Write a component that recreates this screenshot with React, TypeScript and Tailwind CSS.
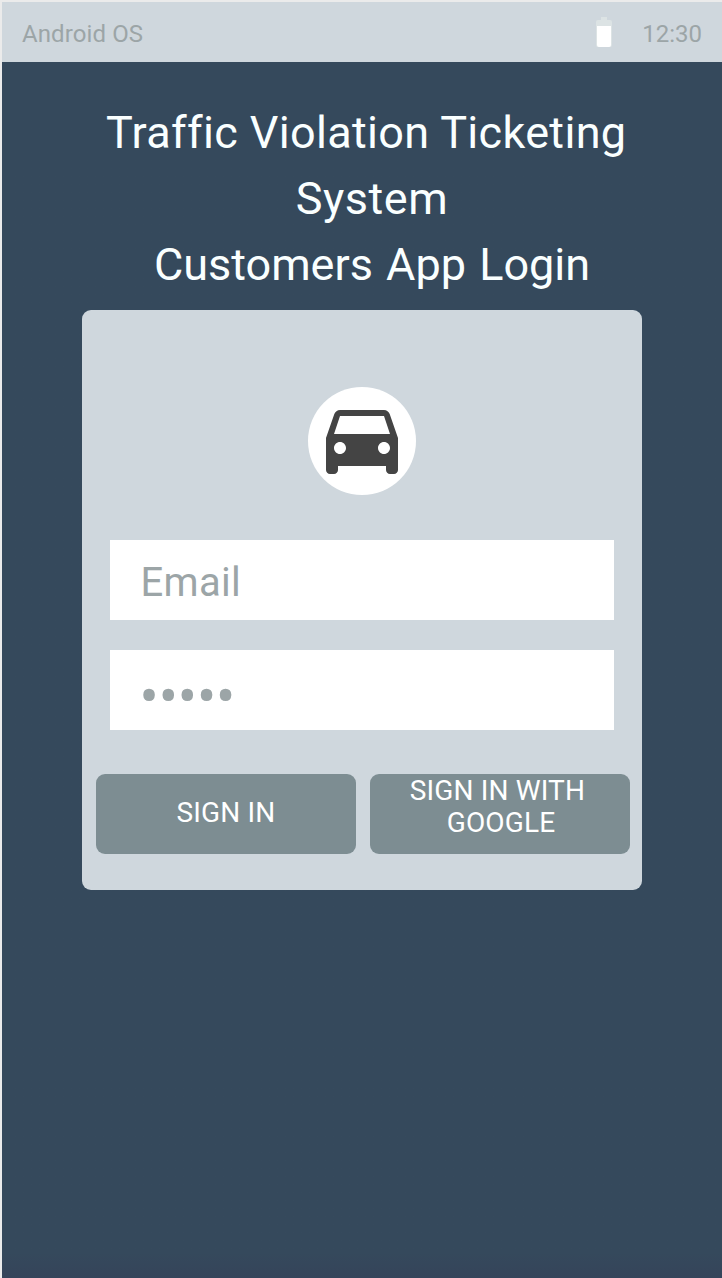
import React from "react";

export default function App() {
  return (
    <main className="flex h-[1278px] w-[722px] flex-col border-l-2 border-t-2 border-[#ebebeb] bg-[#35495c] bg-linear-to-b from-[#35495c] from-98% to-[#35445a] bg-origin-border font-['Roboto','Noto_Sans',sans-serif]">
      <header className="flex h-[60px] items-center bg-[#cfd7dd] pl-5 pr-5 text-2xl text-[#9ca5a7]">
        <span className="pt-1 tracking-[0.1px]">Android OS</span>
        <svg className="ml-auto h-[30px] w-4" viewBox="0 0 16 30">
          <path fill="#dce3e4" d="M5 0h6v3h3q2 0 2 2v23q0 2-2 2H2q-2 0-2-2V5q0-2 2-2h3z" />
          <path fill="#fff" d="M1 9h14v19q0 2-2 2H3q-2 0-2-2z" />
        </svg>
        <time className="ml-[30px] pt-1">12:30</time>
      </header>
      <h1 className="mt-[38px] h-[210px] pl-5 text-center text-[45px] leading-[66px] text-[#faffff]">
        <span className="block tracking-[0.33px]">Traffic Violation Ticketing&nbsp;</span>
        <span className="block tracking-[0.5px]">System</span>
        <span className="block [word-spacing:2px]">Customers App Login</span>
      </h1>
      <section className="ml-20 flex h-[580px] w-[560px] flex-col rounded-[9px] bg-[#cfd7dd] pt-[77px]">
        <div className="flex size-[108px] items-center justify-center self-center rounded-full bg-white pb-[7px]">
          <svg className="size-[96px] shrink-0" viewBox="0 0 24 24" fill="#444">
            <path d="M18.92 6.01C18.72 5.42 18.16 5 17.5 5h-11c-.66 0-1.21.42-1.42 1.01L3 12v8c0 .55.45 1 1 1h1c.55 0 1-.45 1-1v-1h12v1c0 .55.45 1 1 1h1c.55 0 1-.45 1-1v-8l-2.08-5.99zM6.5 16c-.83 0-1.5-.67-1.5-1.5S5.67 13 6.5 13s1.5.67 1.5 1.5S7.33 16 6.5 16zm11 0c-.83 0-1.5-.67-1.5-1.5s.67-1.5 1.5-1.5 1.5.67 1.5 1.5-.67 1.5-1.5 1.5zM5 11l1.5-4.5h11L19 11H5z" />
          </svg>
        </div>
        <div className="mx-7 mt-[45px] flex h-20 items-center bg-white pl-[30.5px] pt-1.5 text-[40px] tracking-[0.3px] text-[#9ca5a7]">Email</div>
        <div className="mx-7 mt-[30px] flex h-20 items-center bg-white pl-[29.5px] pt-3 text-[57px] leading-none tracking-[-0.1px] text-[#9ca5a7]">•••••</div>
        <div className="ml-3.5 mr-3 mt-11 flex gap-3.5">
          <button className="h-20 w-[260px] rounded-[9px] bg-[#7d8d92] pb-0.5 text-[28px] leading-8 tracking-[0.15px] text-white">SIGN IN</button>
          <button className="flex h-20 w-[260px] flex-col items-center rounded-[9px] bg-[#7d8d92] pl-0.5 pt-px text-[28px] leading-8 tracking-[0.15px] text-white">
            <span>SIGN IN WITH&nbsp;</span>
            <span>GOOGLE</span>
          </button>
        </div>
      </section>
    </main>
  );
}
